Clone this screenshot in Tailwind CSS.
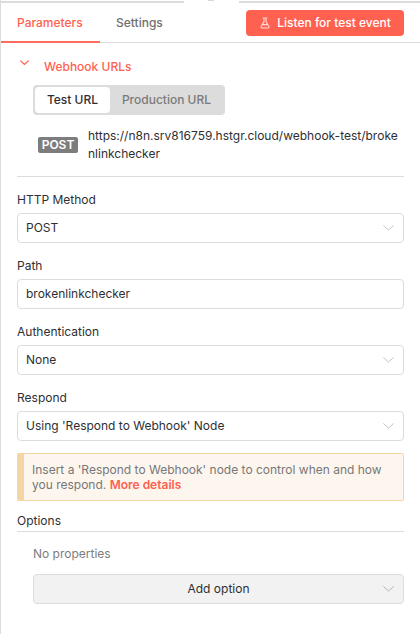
<!DOCTYPE html>
<html>
<head>
<meta charset="utf-8">
<script src="https://cdn.jsdelivr.net/npm/@tailwindcss/browser@4"></script>
</head>
<body class="bg-white">
<div class="w-[420px] h-[634px] overflow-hidden bg-white font-['Inter',sans-serif] text-[12px] text-[#2f2f33] border-l border-[#dcdcdc]">
  <div class="flex h-[3px] -ml-px">
    <div class="w-[184px] border-b-2 border-[#dcdcdc]"></div>
    <div class="w-[55px] relative"><div class="absolute left-[24px] top-0 w-[6px] h-[1px] bg-[#d8d8d8]"></div></div>
    <div class="flex-1 border-b-2 border-[#dcdcdc]"></div>
  </div>
  <div class="flex h-[40px] border-b border-[#dcdcdc] relative">
    <div class="w-[99px] h-[40px] border-b-2 border-[#ff6d5a] pl-[16px] pt-[12px] leading-[15px] font-medium text-[#ff6150]">Parameters</div>
    <div class="pl-[16px] pt-[12px] leading-[15px] font-medium text-[#6f6f6f]">Settings</div>
    <button class="absolute left-[245px] top-[7px] w-[158px] h-[26px] rounded-[4px] bg-[#ff6150] text-white flex items-center justify-center gap-[6px] font-medium text-[12px]">
      <svg width="12" height="12" viewBox="0 0 12 12" fill="none" stroke="#ffd9d3" stroke-width="1.1" stroke-linecap="round" stroke-linejoin="round"><path d="M4 1h4M5 1v3.6L2.2 9.3c-.5.9.1 1.7 1 1.7h5.6c.9 0 1.5-.8 1-1.7L7 4.6V1M3.4 7.6h5.2"/></svg>
      <span>Listen for test event</span>
    </button>
  </div>
  <div class="pl-[16px] pr-[16px]">
    <div class="flex h-[31px] pt-[15px]">
      <svg class="ml-[3px] mt-[2px]" width="9" height="6" viewBox="0 0 9 6" fill="none" stroke="#ff6150" stroke-width="1.2" stroke-linecap="round"><path d="M.8 1l3.7 3.4L8.2 1"/></svg>
      <span class="ml-[15px] leading-[17px] font-medium text-[#ff6150]">Webhook URLs</span>
    </div>
    <div class="ml-[16px] mt-[11px] w-[192px] h-[30px] rounded-[4px] bg-[#dcdcdc] p-[2px] flex text-[12px]">
      <div class="w-[75px] h-[26px] rounded-[4px] bg-white flex items-center justify-center font-medium text-[#2f2f33]">Test URL</div>
      <div class="flex-1 h-[26px] flex items-center justify-center font-medium text-[#7a7a7a]">Production URL</div>
    </div>
    <div class="ml-[21px] mt-[12px] flex items-start h-[36px]">
      <span class="mt-[10px] w-[40px] h-[16px] rounded-[2px] bg-[#7d7d7d] text-white font-semibold flex items-center justify-center leading-none">POST</span>
      <div class="ml-[10px] w-[312px] leading-[18px] break-all text-[#2f2f33]">https://n8n.srv816759.hstgr.cloud/webhook-test/brokenlinkchecker</div>
    </div>
    <div class="mt-[13px] h-px bg-[#dcdcdc]"></div>

    <div class="mt-[14px] leading-[17px]">HTTP Method</div>
    <div class="mt-[5px] h-[30px] rounded-[4px] border border-[#dcdcdc] flex items-center justify-between pl-[8px] pr-[9px]">
      <span>POST</span>
      <svg width="11" height="6" viewBox="0 0 11 6" fill="none" stroke="#c4c4c4" stroke-linecap="round"><path d="M.7.7l4.8 4.4L10.3.7"/></svg>
    </div>
    <div class="mt-[14px] leading-[17px]">Path</div>
    <div class="mt-[5px] h-[30px] rounded-[4px] border border-[#dcdcdc] flex items-center pl-[8px]">brokenlinkchecker</div>
    <div class="mt-[14px] leading-[17px]">Authentication</div>
    <div class="mt-[5px] h-[30px] rounded-[4px] border border-[#dcdcdc] flex items-center justify-between pl-[8px] pr-[9px]">
      <span>None</span>
      <svg width="11" height="6" viewBox="0 0 11 6" fill="none" stroke="#c4c4c4" stroke-linecap="round"><path d="M.7.7l4.8 4.4L10.3.7"/></svg>
    </div>
    <div class="mt-[14px] leading-[17px]">Respond</div>
    <div class="mt-[5px] h-[30px] rounded-[4px] border border-[#dcdcdc] flex items-center justify-between pl-[8px] pr-[9px]">
      <span>Using 'Respond to Webhook' Node</span>
      <svg width="11" height="6" viewBox="0 0 11 6" fill="none" stroke="#c4c4c4" stroke-linecap="round"><path d="M.7.7l4.8 4.4L10.3.7"/></svg>
    </div>
    <div class="mt-[12px] h-[48px] rounded-[2px] border border-[#f5d5a3] border-l-[7px] bg-[#fdf6ef] pl-[8px] pr-[4px] pt-[8px] leading-[15px] text-[#777777]">
      Insert a 'Respond to Webhook' node to control when and how you respond. <a class="font-semibold text-[#ff6150]">More details</a>
    </div>
    <div class="mt-[11px] leading-[17px] pb-[2px] border-b border-[#dcdcdc]">Options</div>
    <div class="ml-[16px] mt-[14px] leading-[15px] text-[#7d7d7d]">No properties</div>
    <div class="ml-[16px] mt-[13px] h-[30px] rounded-[4px] border border-[#dcdcdc] bg-[#f2f2f2] flex items-center justify-center relative">
      <span>Add option</span>
      <svg class="absolute right-[9px] top-[11px]" width="11" height="6" viewBox="0 0 11 6" fill="none" stroke="#b4b4b4" stroke-linecap="round"><path d="M.7.7l4.8 4.4L10.3.7"/></svg>
    </div>
  </div>
</div>
</body>
</html>
